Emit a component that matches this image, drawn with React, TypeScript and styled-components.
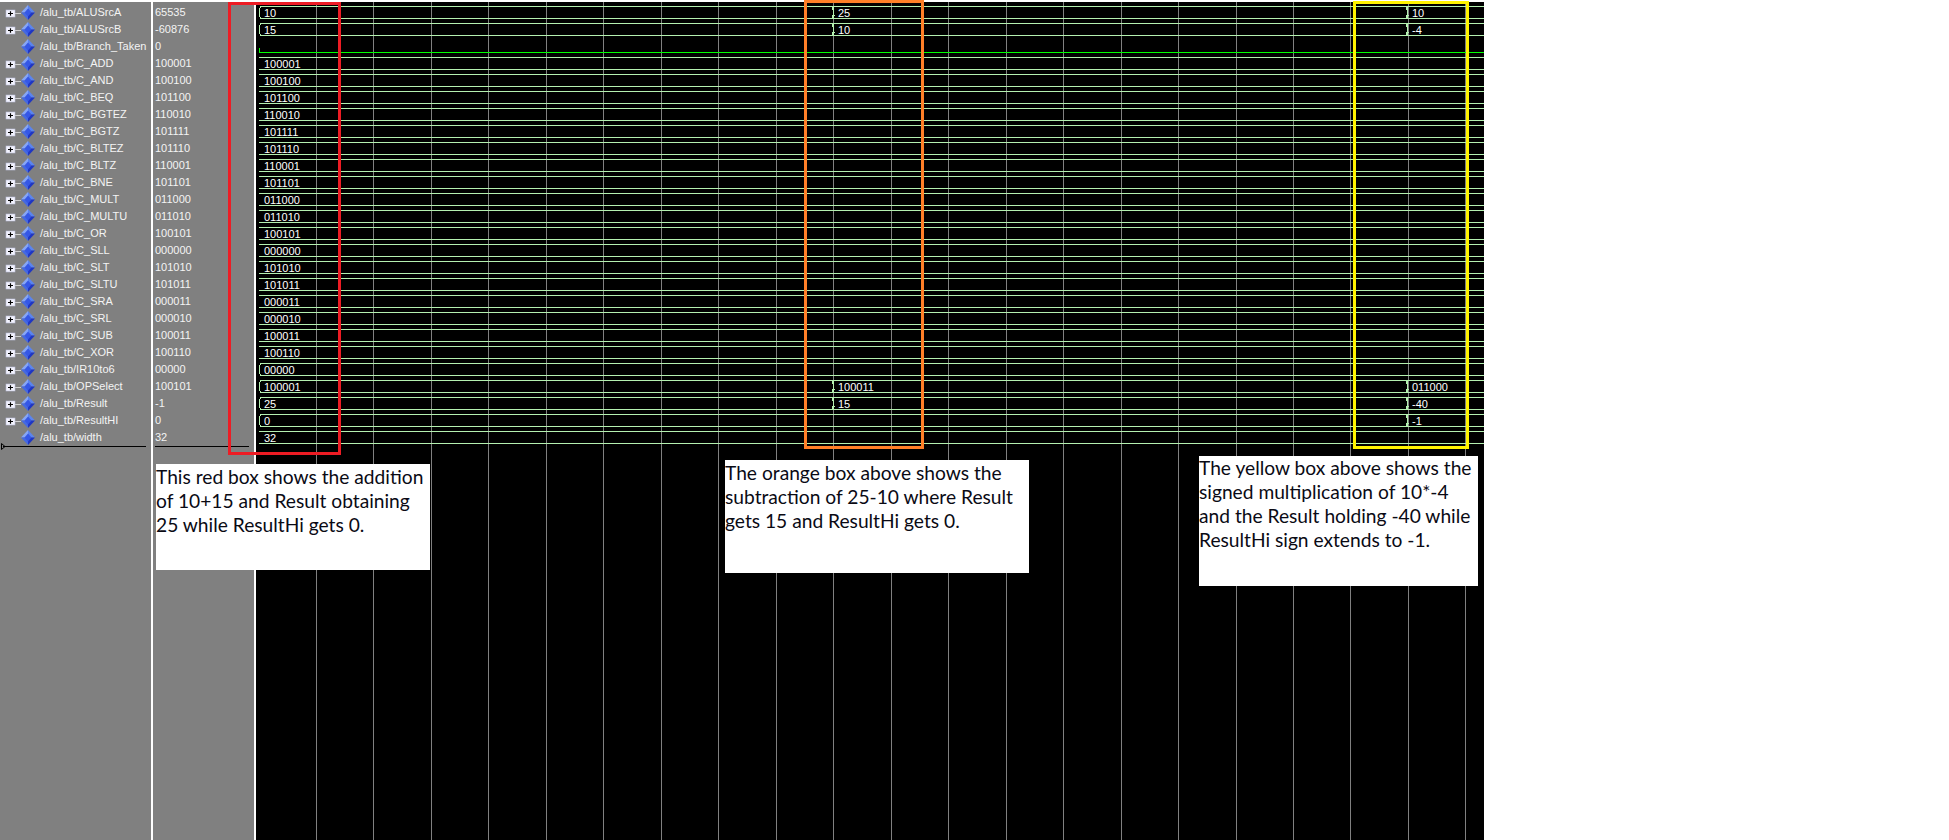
import React from "react";
import styled, { createGlobalStyle } from "styled-components";

type Signal = {
  name: string;
  value: string;
  expandable: boolean;
  labels: string[];
  changes: number[];
  opened?: boolean;
  scalar?: boolean;
};

const bus = (name: string, value: string, wave: string): Signal => ({
  name,
  value,
  expandable: true,
  labels: [wave],
  changes: [],
});

const SIGNALS: Signal[] = [
  { name: "ALUSrcA", value: "65535", expandable: true, labels: ["10", "25", "10"], changes: [833, 1407], opened: true },
  { name: "ALUSrcB", value: "-60876", expandable: true, labels: ["15", "10", "-4"], changes: [833, 1407], opened: true },
  { name: "Branch_Taken", value: "0", expandable: false, labels: [], changes: [], scalar: true },
  bus("C_ADD", "100001", "100001"),
  bus("C_AND", "100100", "100100"),
  bus("C_BEQ", "101100", "101100"),
  bus("C_BGTEZ", "110010", "110010"),
  bus("C_BGTZ", "101111", "101111"),
  bus("C_BLTEZ", "101110", "101110"),
  bus("C_BLTZ", "110001", "110001"),
  bus("C_BNE", "101101", "101101"),
  bus("C_MULT", "011000", "011000"),
  bus("C_MULTU", "011010", "011010"),
  bus("C_OR", "100101", "100101"),
  bus("C_SLL", "000000", "000000"),
  bus("C_SLT", "101010", "101010"),
  bus("C_SLTU", "101011", "101011"),
  bus("C_SRA", "000011", "000011"),
  bus("C_SRL", "000010", "000010"),
  bus("C_SUB", "100011", "100011"),
  bus("C_XOR", "100110", "100110"),
  { name: "IR10to6", value: "00000", expandable: true, labels: ["00000"], changes: [], opened: true },
  { name: "OPSelect", value: "100101", expandable: true, labels: ["100001", "100011", "011000"], changes: [833, 1407], opened: true },
  { name: "Result", value: "-1", expandable: true, labels: ["25", "15", "-40"], changes: [833, 1407], opened: true },
  { name: "ResultHI", value: "0", expandable: true, labels: ["0", "", "-1"], changes: [1407], opened: true },
  { name: "width", value: "32", expandable: false, labels: ["32"], changes: [] },
];

const GRID_LINES = Array.from({ length: 21 }, (_, i) => Math.round(316 + i * 57.47));
const WAVE_LEFT = 256;
const ROW_H = 17;

const GlobalStyle = createGlobalStyle`
  html, body {
    margin: 0;
    padding: 0;
    background: #fff;
  }
`;

const Page = styled.div`
  position: relative;
  width: 1949px;
  height: 840px;
  overflow: hidden;
  background: #fff;
`;

const Simulator = styled.div`
  display: flex;
  width: 1484px;
  height: 838px;
  margin-top: 2px;
`;

const Pane = styled.div<{ $width: number }>`
  flex: none;
  width: ${(p) => p.$width}px;
  box-sizing: border-box;
  padding-top: 2px;
  background: #808080;
  color: #f4f4f4;
  font-family: "Liberation Sans", Tahoma, sans-serif;
  font-size: 11px;
`;

const ValuePane = styled(Pane)`
  margin-left: 2px;
  margin-right: 2px;
  padding-left: 2px;
`;

const Row = styled.div`
  display: flex;
  align-items: center;
  height: ${ROW_H}px;
  line-height: ${ROW_H}px;
  white-space: nowrap;
`;

const NameLabel = styled.span`
  margin-left: 4px;
`;

const Cursor = styled.div<{ $left: number; $width: number }>`
  position: relative;
  height: 1px;
  width: ${(p) => p.$width}px;
  margin-left: ${(p) => p.$left}px;
  background: #000;
`;

const CursorMark = styled.svg`
  position: absolute;
  left: -2px;
  top: -3px;
`;

const WavePane = styled.div`
  position: relative;
  flex: 1;
  min-width: 0;
  overflow: hidden;
  background: #000;
  padding-top: 2px;
  color: #fff;
  font-family: "Liberation Sans", Tahoma, sans-serif;
  font-size: 11px;
`;

const WaveCanvas = styled.svg`
  position: absolute;
  left: 0;
  top: -2px;
`;

const WaveRow = styled(Row)`
  position: relative;
  padding: 1px 0 0 8px;
  box-sizing: border-box;
`;

const Segment = styled.span`
  flex: none;
  width: 574px;
`;

const Marker = styled.div<{ $top: number; $left: number; $width: number; $height: number; $color: string }>`
  position: absolute;
  top: ${(p) => p.$top}px;
  left: ${(p) => p.$left}px;
  width: ${(p) => p.$width}px;
  height: ${(p) => p.$height}px;
  box-sizing: border-box;
  border: 3px solid ${(p) => p.$color};
`;

const Note = styled.div<{ $top: number; $left: number; $width: number; $height: number; $pad: number }>`
  position: absolute;
  top: ${(p) => p.$top}px;
  left: ${(p) => p.$left}px;
  width: ${(p) => p.$width}px;
  height: ${(p) => p.$height}px;
  box-sizing: border-box;
  padding-top: ${(p) => p.$pad}px;
  background: #fff;
  color: #0a0a14;
  font-family: Lato, "Open Sans", sans-serif;
  font-size: 19.2px;
  line-height: 24px;
  white-space: nowrap;
`;

const SignalIcon = ({ expandable }: { expandable: boolean }) => (
  <svg width="36" height="17" viewBox="0 0 36 17" style={{ flex: "none" }}>
    {expandable && (
      <>
        <line x1="15" y1="9.5" x2="21" y2="9.5" stroke="#d0d0d0" />
        <rect x="6" y="6" width="9" height="7" fill="#f4f4ff" stroke="#b8bcd8" strokeWidth="0.6" />
        <path d="M8 9.5h5M10.5 7.2v4.6" stroke="#000" strokeWidth="1.2" />
      </>
    )}
    <polygon points="28,1 35,8.5 28,8.5" fill="#5b84ee" />
    <polygon points="28,1 21,8.5 28,8.5" fill="#86a6f6" />
    <polygon points="21,8.5 28,16 28,8.5" fill="#4569e2" />
    <polygon points="35,8.5 28,16 28,8.5" fill="#1f36c4" />
    <polygon points="28,4.5 31.5,8.5 28,12.5 24.5,8.5" fill="#3557e6" />
  </svg>
);

const SignalWave = ({ signal, index }: { signal: Signal; index: number }) => {
  const top = 6 + index * ROW_H + 0.5;
  const bottom = top + 12;
  const color = "#b4f0b0";

  if (signal.scalar) {
    return (
      <g stroke="#00ff00" fill="none">
        <path d={`M${259.5 - WAVE_LEFT} ${bottom - 5}V${bottom}H${1484 - WAVE_LEFT}`} />
      </g>
    );
  }

  return (
    <g stroke={color} fill="none">
      {signal.opened ? (
        <path
          d={`M${1484 - WAVE_LEFT} ${top}H${261 - WAVE_LEFT}L${259.5 - WAVE_LEFT} ${top + 2}V${bottom - 2}L${261 - WAVE_LEFT} ${bottom}H${1484 - WAVE_LEFT}`}
        />
      ) : (
        <path d={`M${259 - WAVE_LEFT} ${top}H${1484 - WAVE_LEFT}M${259 - WAVE_LEFT} ${bottom}H${1484 - WAVE_LEFT}`} />
      )}
      {signal.changes.map((t) => (
        <path
          key={t}
          d={`M${t - WAVE_LEFT - 1} ${top}L${t - WAVE_LEFT + 1.5} ${top + 3}M${t - WAVE_LEFT + 1.5} ${top}L${t - WAVE_LEFT - 1} ${top + 3}M${t - WAVE_LEFT - 1} ${bottom}L${t - WAVE_LEFT + 1.5} ${bottom - 3}M${t - WAVE_LEFT + 1.5} ${bottom}L${t - WAVE_LEFT - 1} ${bottom - 3}M${t - WAVE_LEFT + 0.5} ${top + 2}V${bottom - 2}`}
        />
      ))}
    </g>
  );
};

export default function App() {
  return (
    <Page>
      <GlobalStyle />
      <Simulator>
        <Pane $width={151}>
          {SIGNALS.map((s) => (
            <Row key={s.name}>
              <SignalIcon expandable={s.expandable} />
              <NameLabel>/alu_tb/{s.name}</NameLabel>
            </Row>
          ))}
          <Cursor $left={3} $width={143}>
            <CursorMark width="5" height="7" viewBox="0 0 5 7">
              <path d="M0.5 0.5L4 3.5L0.5 6.5Z" fill="none" stroke="#000" />
            </CursorMark>
          </Cursor>
        </Pane>
        <ValuePane $width={101}>
          {SIGNALS.map((s) => (
            <Row key={s.name}>{s.value}</Row>
          ))}
          <Cursor $left={0} $width={94} />
        </ValuePane>
        <WavePane>
          <WaveCanvas width={1228} height={840} shapeRendering="crispEdges">
            {GRID_LINES.map((x) => (
              <line key={x} x1={x - WAVE_LEFT + 0.5} x2={x - WAVE_LEFT + 0.5} y1={2} y2={840} stroke="#808080" />
            ))}
            {SIGNALS.map((s, i) => (
              <SignalWave key={s.name} signal={s} index={i} />
            ))}
          </WaveCanvas>
          {SIGNALS.map((s) => (
            <WaveRow key={s.name}>
              {s.labels.map((label, i) => (
                <Segment key={i}>{label}</Segment>
              ))}
            </WaveRow>
          ))}
        </WavePane>
      </Simulator>

      <Marker $top={2} $left={228} $width={113} $height={453} $color="#ed1c24" />
      <Marker $top={0} $left={804} $width={120} $height={449} $color="#ff7f27" />
      <Marker $top={1} $left={1353} $width={116} $height={448} $color="#fff200" />

      <Note $top={464} $left={156} $width={274} $height={106} $pad={1}>
        This red box shows the addition
        <br />
        of 10+15 and Result obtaining
        <br />
        25 while ResultHi gets 0.
      </Note>
      <Note $top={460} $left={725} $width={304} $height={113} $pad={1}>
        The orange box above shows the
        <br />
        subtraction of 25-10 where Result
        <br />
        gets 15 and ResultHi gets 0.
      </Note>
      <Note $top={456} $left={1199} $width={279} $height={130} $pad={0}>
        The yellow box above shows the
        <br />
        signed multiplication of 10*-4
        <br />
        and the Result holding -40 while
        <br />
        ResultHi sign extends to -1.
      </Note>
    </Page>
  );
}
